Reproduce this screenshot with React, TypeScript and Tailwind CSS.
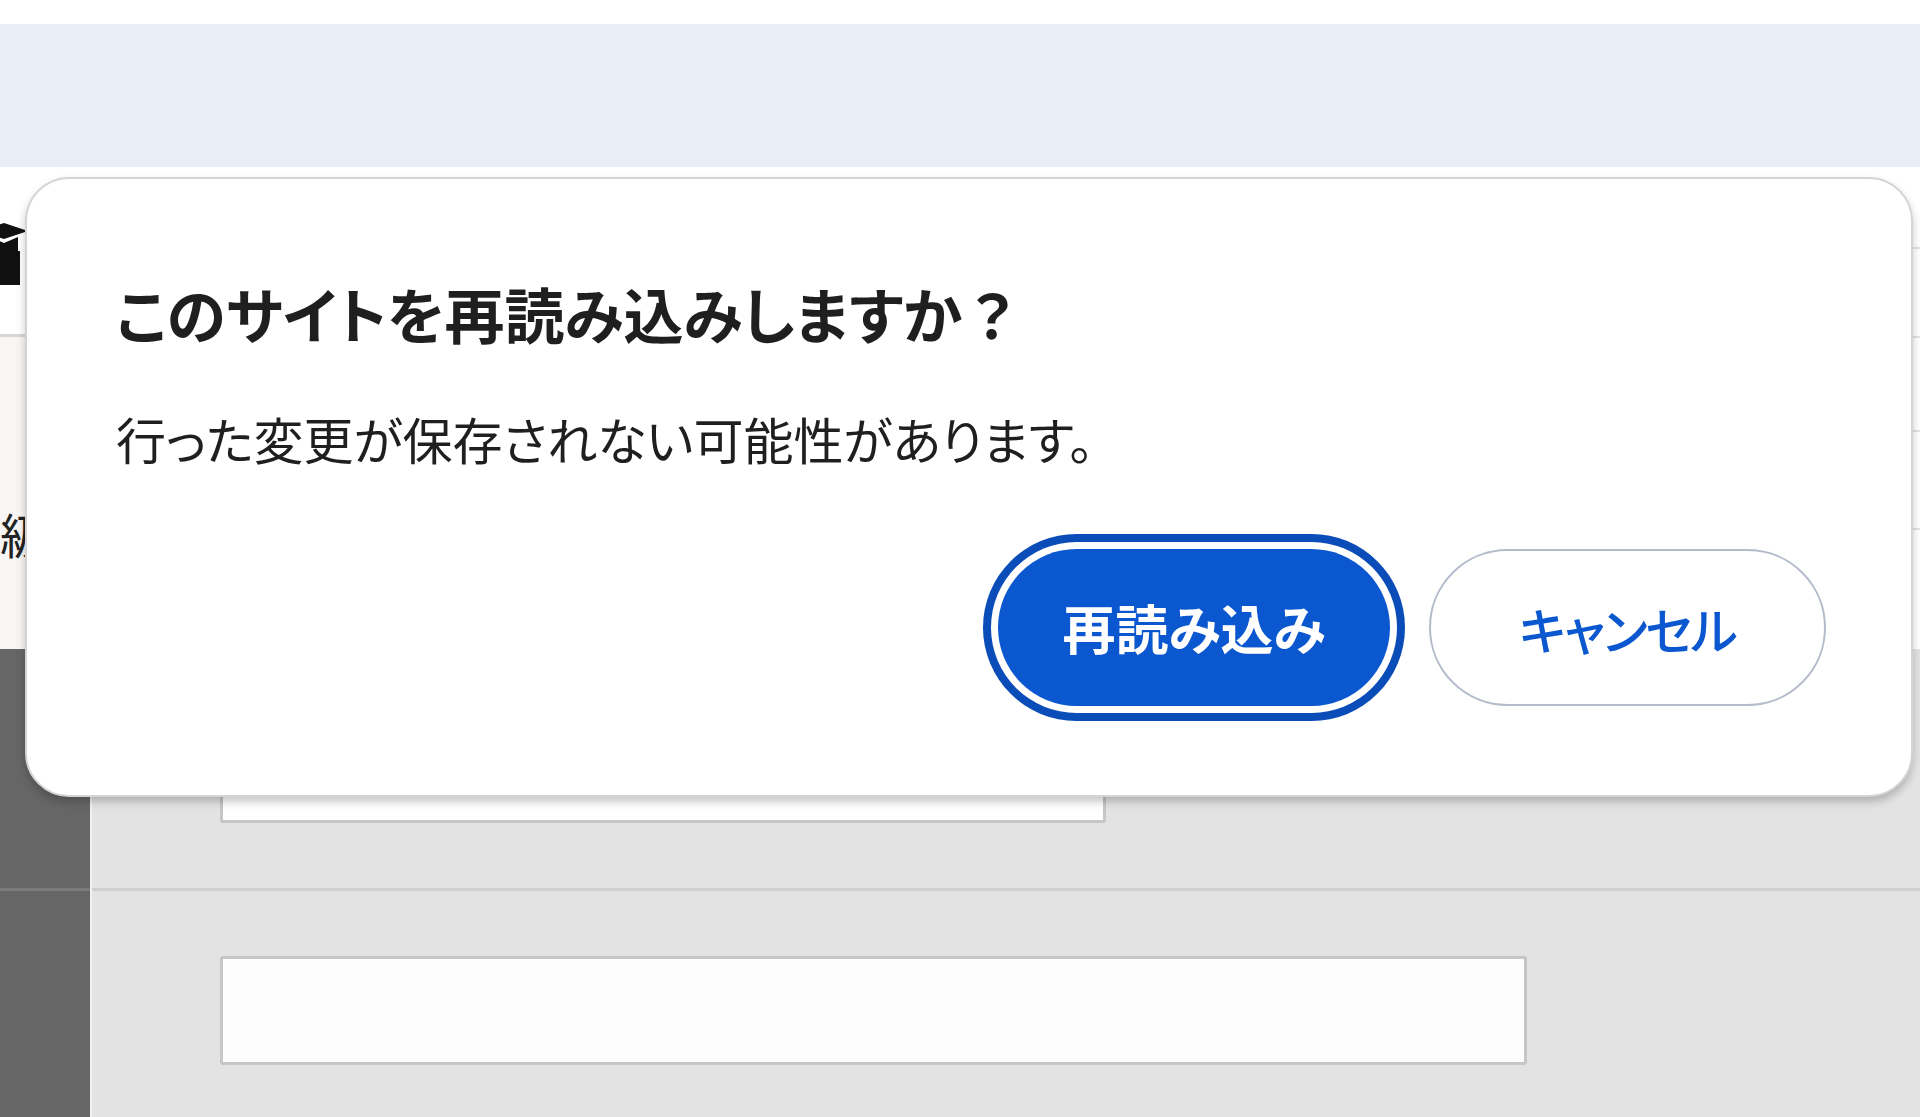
import React from "react"

const jp = `font-["Noto_Sans_CJK_JP","Noto_Sans",sans-serif]`

function Sidebar() {
    return <div className="w-[92px] flex flex-col shrink-0">
        <div className="h-[482px] bg-[#f7f6f4] flex flex-col">
            <div className="h-[170px] bg-white border-b-[3px] border-[#d6d6d6] relative">
                <svg className="absolute left-[-22px] top-[54px]" width="52" height="64" viewBox="0 0 52 64">
                    <path d="M2 10 L26 2 L50 10 L26 18 Z" fill="#111" />
                    <path d="M12 16 L12 30 Q26 38 40 30 L40 16 L26 22 Z" fill="#111" />
                    <rect x="10" y="30" width="32" height="34" fill="#111" />
                </svg>
            </div>
            <div className="flex-1 relative">
                <span className={`absolute left-0 top-[172px] text-[48px] leading-none text-[#222] ${jp}`}>級</span>
            </div>
        </div>
        <div className="flex-1 bg-[#666666] border-r-2 border-[#f2f2f2] flex flex-col">
            <div className="h-[242px] border-b-[3px] border-[#7b7b7b]" />
        </div>
    </div>
}

function MainArea() {
    return <div className="flex-1 flex flex-col">
        <div className="h-[482px] bg-white flex flex-col">
            {[82, 89, 94, 98].map((h, i) => (
                <div key={i} className="border-b-2 border-[#e4e4e4]" style={{ height: h }} />
            ))}
        </div>
        <div className="flex-1 bg-[#e3e3e3] flex flex-col">
            <div className="h-[242px] border-b-[3px] border-[#cfcfcf] pl-[128px] pt-[74px]">
                <div className="w-[886px] h-[100px] bg-white border-[3px] border-[#c6c6c6] rounded-[3px]" />
            </div>
            <div className="pl-[128px] pt-[65px]">
                <div className="w-[1307px] h-[109px] bg-[#fdfdfd] border-[3px] border-[#c6c6c6] rounded-[3px]" />
            </div>
        </div>
    </div>
}

function ReloadDialog() {
    return <div className={`absolute left-[25px] top-[177px] w-[1888px] h-[620px] bg-white rounded-[44px] border-2 border-[#d4d4d4] shadow-[0_5px_8px_rgba(0,0,0,0.22)] flex flex-col pl-[89px] pr-[85px] pt-[104px] ${jp}`}>
        <h1 className="text-[60px] leading-none font-bold text-[#1f1f1f] [font-feature-settings:'palt']">
            このサイトを再読み込みしますか<span className="[font-feature-settings:normal]">？</span>
        </h1>
        <p className="mt-[70px] text-[50px] leading-none text-[#1f1f1f] [font-feature-settings:'palt']">
            行った変更が保存されない可能性があります。
        </p>
        <div className="mt-[86px] flex justify-end gap-[39px]">
            <button className="w-[392px] h-[157px] rounded-full bg-[#0b57d0] text-white text-[53px] leading-none font-bold ring-[8px] ring-[#0a4cb8] ring-offset-[7px] ring-offset-white flex items-center justify-center [font-feature-settings:'palt']">
                再読み込み
            </button>
            <button className="w-[397px] h-[157px] rounded-full bg-white border-2 border-[#b4bccb] text-[#0b57d0] text-[50px] tracking-[-2px] leading-none font-medium flex items-center justify-center [font-feature-settings:'palt']">
                キャンセル
            </button>
        </div>
    </div>
}

export default function App() {
    return (
        <div className="w-[1920px] h-[1117px] relative overflow-hidden bg-white flex flex-col">
            <div className="h-[24px] bg-white shrink-0" />
            <div className="h-[143px] bg-[#e9eef6] shrink-0" />
            <div className="flex-1 flex">
                <Sidebar />
                <MainArea />
            </div>
            <ReloadDialog />
        </div>
    )
}
